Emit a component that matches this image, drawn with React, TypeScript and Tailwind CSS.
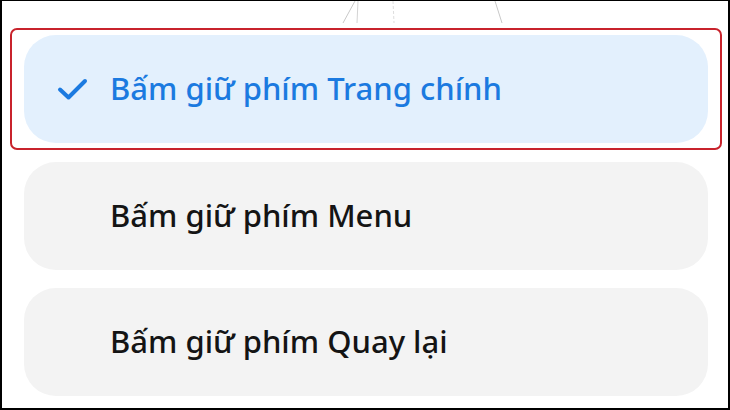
import React from 'react';

type Option = { id: string; label: string };

const options: Option[] = [
  { id: 'home', label: 'Bấm giữ phím Trang chính' },
  { id: 'menu', label: 'Bấm giữ phím Menu' },
  { id: 'back', label: 'Bấm giữ phím Quay lại' },
];

const CheckIcon: React.FC = () => (
  <svg width="32" height="24" viewBox="0 0 32 24" fill="none">
    <path d="M3 12.5 L11.5 20.5 L28 4" stroke="#1b7ae0" strokeWidth="4" strokeLinecap="round" strokeLinejoin="round" />
  </svg>
);

const App: React.FC = () => {
  const selected = 'home';

  return (
    <div className="w-[730px] h-[410px] bg-white border-l-2 border-r-2 border-b-2 border-t border-black overflow-hidden font-['Noto_Sans',sans-serif]">
      {/* edge of the illustration above the list */}
      <svg width="726" height="27" className="block">
        <path d="M353 0 L341 22" stroke="#c8c8c8" strokeWidth="1" />
        <path d="M356 0 L355 22" stroke="#d4d4d4" strokeWidth="1" />
        <path d="M391 0 L392 22" stroke="#dedede" strokeWidth="1" strokeDasharray="3 2" />
        <path d="M493 0 L500 22" stroke="#c8c8c8" strokeWidth="1" />
      </svg>

      <div className="flex flex-col">
        {options.map((opt, i) => {
          const active = opt.id === selected;
          const card = (
            <div
              className={`w-[684px] h-[108px] rounded-[32px] flex items-center ${
                active ? 'bg-[#e3f0fd]' : 'bg-[#f3f3f3]'
              }`}
            >
              <div className="w-[86px] pl-[33px] flex items-center">{active && <CheckIcon />}</div>
              <span
                className={`text-[31px] leading-none font-medium pb-[2px] ${
                  active ? 'text-[#1b7ae0]' : 'text-[#141414]'
                }`}
              >
                {opt.label}
              </span>
            </div>
          );

          return active ? (
            <div key={opt.id} className="ml-[8px] w-[712px] h-[122px] border-2 border-[#c8232c] rounded-[7px] px-[12px] pt-[5px]">
              {card}
            </div>
          ) : (
            <div key={opt.id} className={`ml-[22px] ${i === 1 ? 'mt-[12px]' : 'mt-[18px]'}`}>
              {card}
            </div>
          );
        })}
      </div>
    </div>
  );
};

export default App;
